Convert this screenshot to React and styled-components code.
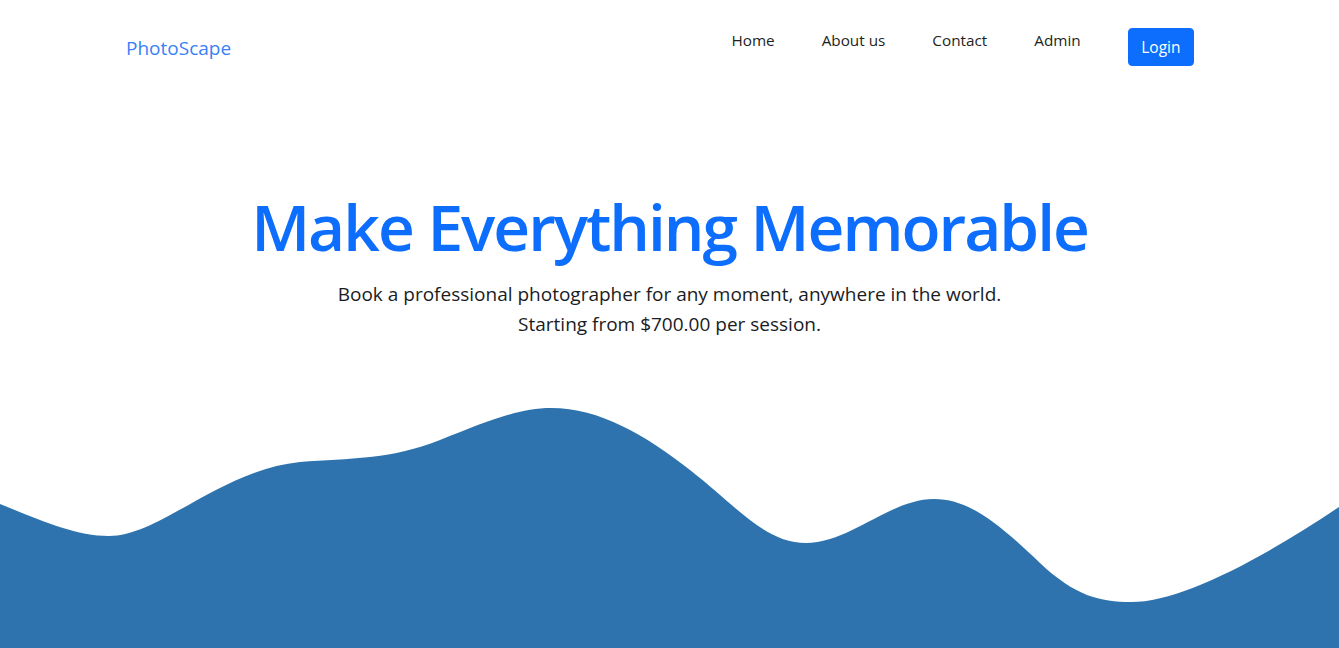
import React from "react";
import styled, { createGlobalStyle } from "styled-components";

const GlobalStyle = createGlobalStyle`
  * { box-sizing: border-box; }
  html, body { margin: 0; padding: 0; background: #fff; }
  body {
    font-family: "Open Sans", "Noto Sans", "Liberation Sans", sans-serif;
    color: #212529;
  }
`;

const Page = styled.div`
  min-height: 100vh;
  display: flex;
  flex-direction: column;
  overflow: hidden;
`;

const Header = styled.header`
  display: flex;
  justify-content: space-between;
  align-items: flex-start;
  padding: 28px 145px 0 126px;
`;

const Brand = styled.a`
  font-size: 19px;
  line-height: 40px;
  color: #3a7ff6;
  text-decoration: none;
`;

const Nav = styled.nav`
  display: flex;
  align-items: flex-start;
  gap: 47px;
`;

const NavLink = styled.a`
  font-size: 15.3px;
  line-height: 24px;
  color: #1d1f22;
  text-decoration: none;
`;

const LoginButton = styled.button`
  font-family: inherit;
  font-size: 15.5px;
  line-height: 24px;
  color: #fff;
  background: #0d6efd;
  border: 1px solid #0d6efd;
  border-radius: 4px;
  padding: 6px 12.5px;
  height: 38px;
  cursor: pointer;
`;

const Hero = styled.section`
  display: flex;
  flex-direction: column;
  align-items: center;
  text-align: center;
  padding-top: 117px;
`;

const Title = styled.h1`
  margin: 0;
  font-size: 64px;
  line-height: 84px;
  font-weight: 600;
  color: #0d6efd;
  letter-spacing: -2px;
`;

const Lead = styled.p`
  margin: 10px 0 0;
  font-size: 19px;
  line-height: 30px;
  font-weight: 400;
  color: #1a1c1f;
`;

const WaveWrap = styled.div`
  margin-top: auto;
  height: 248px;
  line-height: 0;
`;

const WaveSvg = styled.svg`
  display: block;
  width: 100%;
  height: 248px;
`;

function Wave() {
  return (
    <WaveWrap>
      <WaveSvg viewBox="0 0 1339 248" preserveAspectRatio="none">
        <path
          fill="#2e73ae"
          d="M0,104 C40,120 75,136 109,136 C160,136 220,70 300,62 C350,58 390,60 440,40 C490,20 520,8 551,8 C600,8 645,35 690,70 C735,105 765,143 806,143 C850,143 890,99 934,99 C970,99 1000,125 1040,163 C1075,196 1100,202 1131,202 C1180,202 1260,160 1339,107 L1339,248 L0,248 Z"
        />
      </WaveSvg>
    </WaveWrap>
  );
}

export default function App() {
  return (
    <>
      <GlobalStyle />
      <Page>
        <Header>
          <Brand href="#">PhotoScape</Brand>
          <Nav>
            <NavLink href="#">Home</NavLink>
            <NavLink href="#">About us</NavLink>
            <NavLink href="#">Contact</NavLink>
            <NavLink href="#">Admin</NavLink>
            <LoginButton>Login</LoginButton>
          </Nav>
        </Header>
        <Hero>
          <Title>Make Everything Memorable</Title>
          <Lead>
            Book a professional photographer for any moment, anywhere in the world.
            <br />
            Starting from $700.00 per session.
          </Lead>
        </Hero>
        <Wave />
      </Page>
    </>
  );
}
